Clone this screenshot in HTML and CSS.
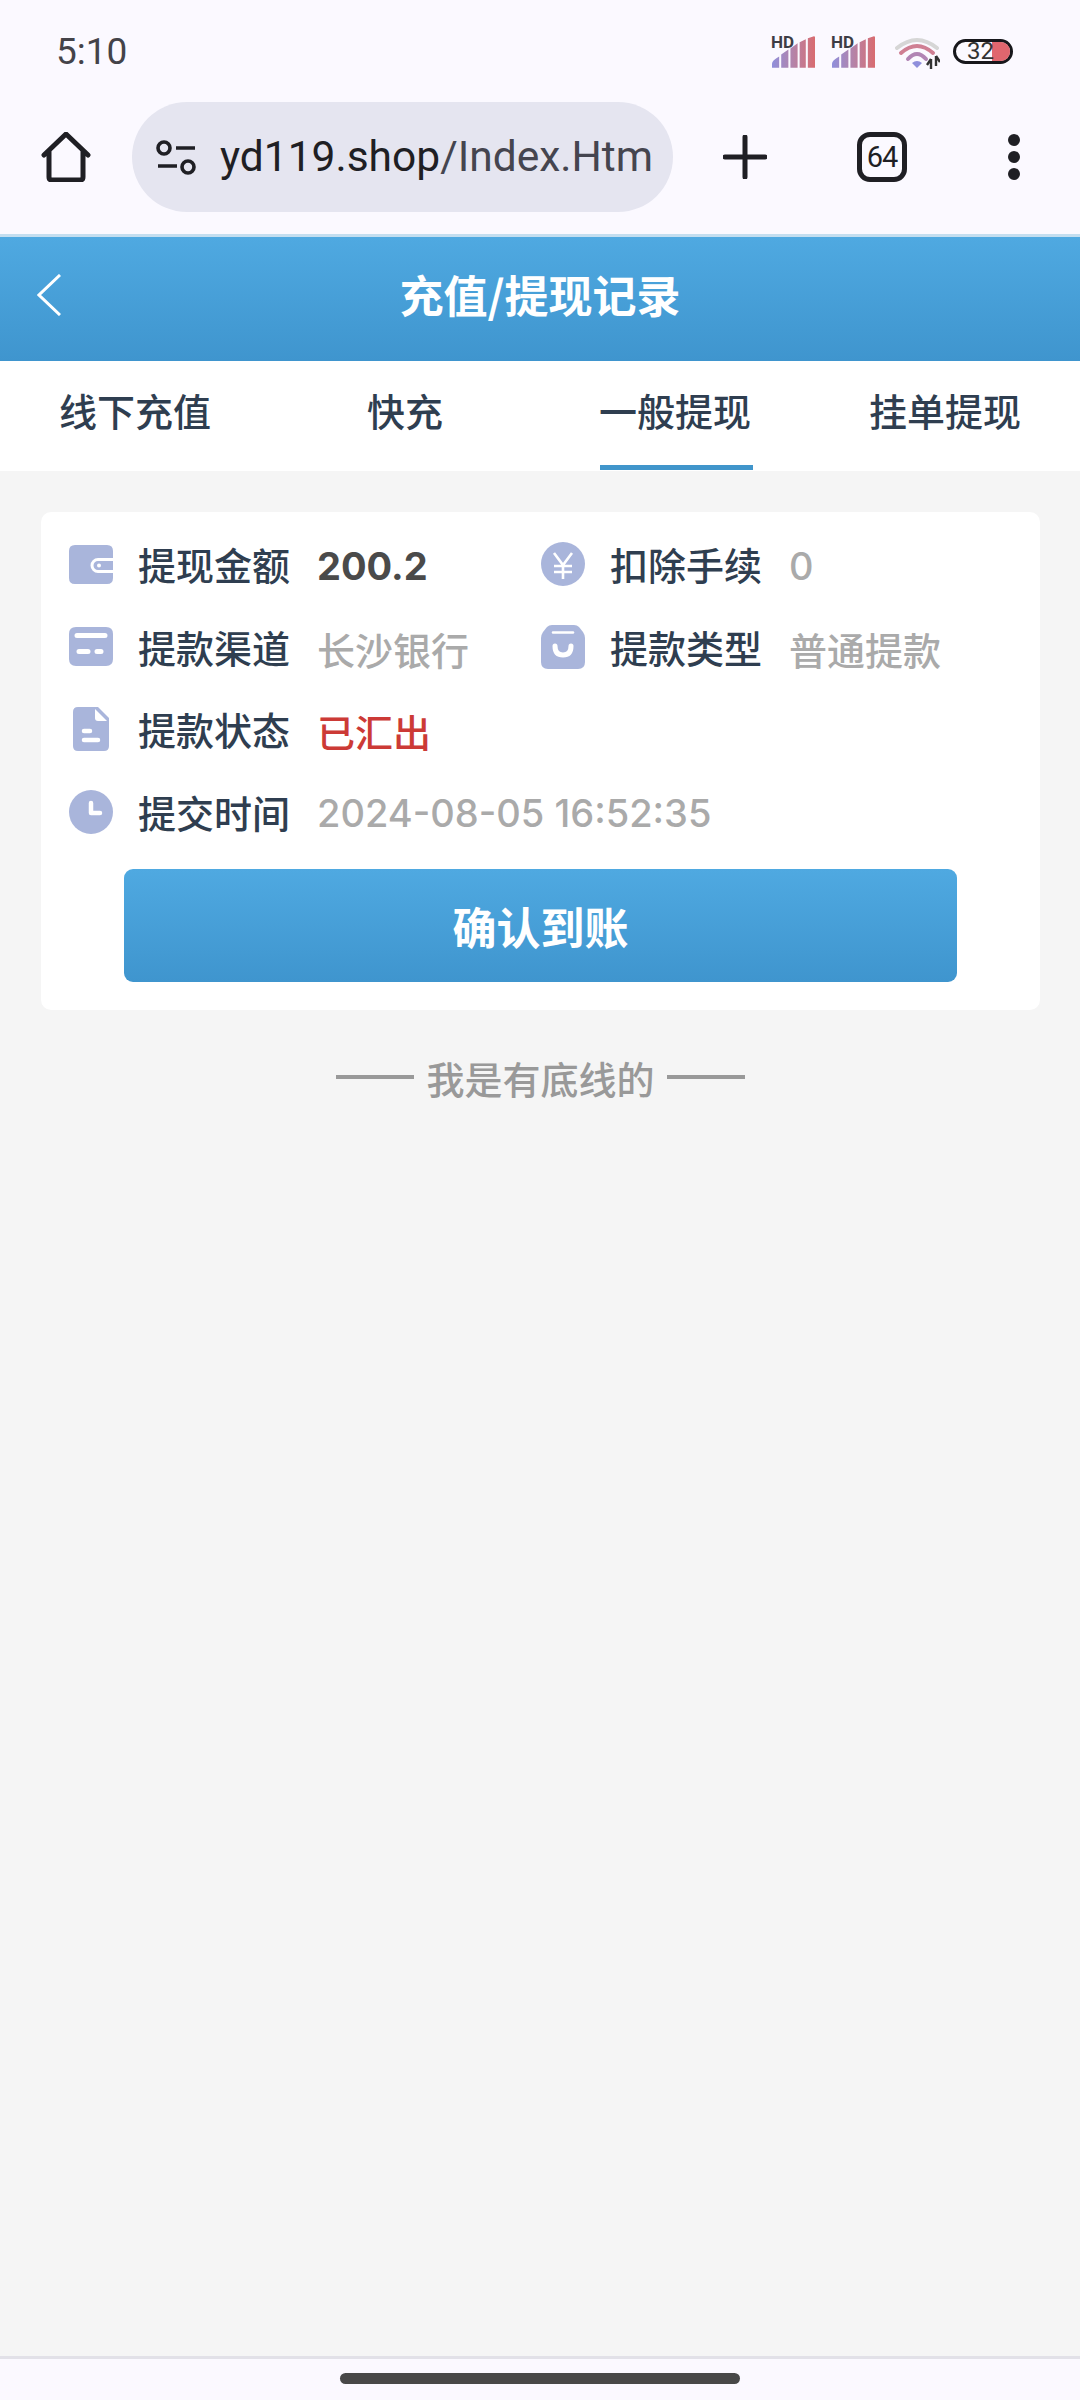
FILE: index.html
```html
<!DOCTYPE html>
<html lang="zh-CN">
<head>
<meta charset="utf-8">
<title>充值/提现记录</title>
<link rel="stylesheet" href="styles.css">
</head>
<body>
<div class="chrome">
  <div class="statusbar">
    <span class="clock">5:10</span>
    <div class="status-icons">
      <div class="signal"><span class="hd">HD</span>
        <svg width="43" height="32" viewBox="0 0 42 31"><defs><linearGradient id="sg" x1="0" x2="1" y1="0" y2="0"><stop offset="0" stop-color="#8f8fdc"/><stop offset=".5" stop-color="#b583a8"/><stop offset="1" stop-color="#d96c70"/></linearGradient></defs><path fill="url(#sg)" d="M0 31v-4q0-3 7-7v11zM9 31V18l7-5v18zM18 31V12l7-5v24zM27 31V6l6-3v28zM35 31V2l6-2q1 0 1 1v30z"/></svg>
      </div>
      <div class="signal"><span class="hd">HD</span>
        <svg width="43" height="32" viewBox="0 0 42 31"><path fill="url(#sg)" d="M0 31v-4q0-3 7-7v11zM9 31V18l7-5v18zM18 31V12l7-5v24zM27 31V6l6-3v28zM35 31V2l6-2q1 0 1 1v30z"/></svg>
      </div>
      <svg class="wifi" width="45" height="34" viewBox="0 0 45 34" fill="none"><path d="M2 12Q22-4 42 12" stroke="#d6d6d6" stroke-width="4" stroke-linecap="round"/><path d="M6 17Q22 3 38 17" stroke="#cf7f93" stroke-width="4" stroke-linecap="round"/><path d="M13 23Q22 13 31 23" stroke="#b184b4" stroke-width="4" stroke-linecap="round"/><path d="M17 27q5-4 10 0l-5 5z" fill="#8f8fdc"/><path d="M36 23v10M32 29l4-6M41 20v10M41 20l4 6" stroke="#333" stroke-width="2.4"/></svg>
      <div class="battery"><span class="battery-fill"></span><span class="battery-num">32</span></div>
    </div>
  </div>
  <div class="toolbar">
    <svg class="tb-home" width="50" height="50" viewBox="0 0 50 50" fill="none"><path d="M3 23 25 2l22 21M8 19v26q0 3 3 3h28q3 0 3-3V19" stroke="#1f1f24" stroke-width="5" stroke-linecap="round" stroke-linejoin="round"/></svg>
    <div class="pill">
      <svg class="tune" width="40" height="36" viewBox="0 0 40 36" fill="none" stroke="#1f1f24" stroke-width="3.6"><circle cx="8" cy="8" r="6"/><path d="M20 8h19M2 26h19"/><circle cx="32" cy="27" r="6"/></svg>
      <span class="url">yd119.shop<span class="url-path">/Index.Htm</span></span>
    </div>
    <svg class="tb-plus" width="44" height="44" viewBox="0 0 44 44" fill="none"><path d="M22 2v40M2 22h40" stroke="#1f1f24" stroke-width="5" stroke-linecap="round"/></svg>
    <div class="tabcount">64</div>
    <div class="dots"><i></i><i></i><i></i></div>
  </div>
</div>
<header class="head">
  <svg class="back" width="24" height="42" viewBox="0 0 24 42" fill="none"><path d="M23 1 2 21l21 20" stroke="#fff" stroke-width="3"/></svg>
  <h1 class="title">充值/提现记录</h1>
</header>
<nav class="tabs">
  <a class="tab">线下充值</a>
  <a class="tab">快充</a>
  <a class="tab active">一般提现</a>
  <a class="tab">挂单提现</a>
</nav>
<main class="main">
  <section class="card">
    <div class="grid">
      <div class="item">
        <span class="ico"><svg width="44" height="39" viewBox="0 0 44 39"><path fill="#a9b5db" d="M6 0h32q6 0 6 6v7H29a7.500 7.500 0 0 0 0 15h15v5q0 6-6 6H6q-6 0-6-6V6q0-6 6-6z"/><path fill="#a9b5db" d="M29 16h15v9H29a4.500 4.500 0 0 1 0-9z"/><circle cx="30" cy="20.500" r="2" fill="#fff"/></svg></span>
        <span class="label">提现金额</span><span class="val strong">200.2</span>
      </div>
      <div class="item right">
        <span class="ico"><svg width="44" height="44" viewBox="0 0 44 44"><circle cx="22" cy="22" r="22" fill="#a9b5db"/><path d="M13 11l9 12 9-12M13 24h18M13 30h18M22 23v14" fill="none" stroke="#fff" stroke-width="2.600"/></svg></span>
        <span class="label">扣除手续</span><span class="val">0</span>
      </div>
      <div class="item">
        <span class="ico"><svg width="44" height="39" viewBox="0 0 44 39"><path fill="#a9b5db" d="M7 0h30q7 0 7 7v25q0 7-7 7H7q-7 0-7-7V7q0-7 7-7z"/><path d="M8 8.500h28M10 24.500h9M28 24.500h4" stroke="#fff" stroke-width="5" stroke-linecap="round"/></svg></span>
        <span class="label">提款渠道</span><span class="val">长沙银行</span>
      </div>
      <div class="item right">
        <span class="ico"><svg width="44" height="44" viewBox="0 0 44 44"><path fill="#a9b5db" d="M11 0h22q3 0 5 2l4 5q2 3 2 6v24q0 7-7 7H7q-7 0-7-7V13q0-3 2-6l4-5q2-2 5-2z"/><path d="M12 7.500h20" stroke="#fff" stroke-width="2.500" stroke-linecap="round"/><path d="M14 21q0 9 8 9t8-9" fill="none" stroke="#fff" stroke-width="5" stroke-linecap="round"/></svg></span>
        <span class="label">提款类型</span><span class="val">普通提款</span>
      </div>
      <div class="item wide">
        <span class="ico"><svg width="36" height="44" viewBox="0 0 36 44"><path fill="#a9b5db" d="M5 0h20l11 11v28q0 5-5 5H5q-5 0-5-5V5q0-5 5-5z"/><path fill="#fff" d="M22 2l12 12h-9q-3 0-3-3z"/><path d="M11 24h6M11 33h14" stroke="#fff" stroke-width="4.500" stroke-linecap="round"/></svg></span>
        <span class="label">提款状态</span><span class="val red">已汇出</span>
      </div>
      <div class="item wide">
        <span class="ico"><svg width="44" height="44" viewBox="0 0 44 44"><circle cx="22" cy="22" r="22" fill="#a9b5db"/><path d="M22 13v10h9" fill="none" stroke="#fff" stroke-width="4.500" stroke-linecap="round" stroke-linejoin="round"/></svg></span>
        <span class="label">提交时间</span><span class="val">2024-08-05 16:52:35</span>
      </div>
    </div>
    <button class="confirm">确认到账</button>
  </section>
  <p class="end"><span class="dash"></span>我是有底线的<span class="dash"></span></p>
</main>
<footer class="nav"><span class="handle"></span></footer>
</body>
</html>
```

FILE: styles.css
```css
* { box-sizing: border-box; }
html, body { margin: 0; height: 100%; }
body {
  width: 1080px;
  height: 2400px;
  display: flex;
  flex-direction: column;
  background: #f5f5f5;
  font-family: "Noto Sans CJK SC", "Noto Sans", sans-serif;
  overflow: hidden;
}
.chrome { height: 234px; background: #fbf9ff; flex: none; }
.statusbar {
  height: 102px;
  display: flex;
  justify-content: space-between;
  align-items: flex-start;
  padding: 31px 67px 0 56px;
}
.clock { font: 400 37px/42px Roboto, sans-serif; color: #444349; }
.status-icons { display: flex; align-items: flex-start; padding-top: 5px; }
.signal { position: relative; width: 43px; height: 32px; margin-right: 17px; }
.signal svg { display: block; }
.hd {
  position: absolute; left: -1px; top: -1px;
  font: 700 17px/15px Roboto, sans-serif; color: #3d3d45;
}
.wifi { display: block; margin: 0 13px 0 3px; }
.battery {
  position: relative; width: 60px; height: 25px; margin-top: 3px;
  border: 3.500px solid #17171b; border-radius: 13px;
  background: #fbf9ff;
}
.battery-fill { position: absolute; right: 0; top: 0; bottom: 0; width: 18px; background: #e0666e; border-radius: 0 9px 9px 0; }
.battery-num {
  position: absolute; left: 11px; top: -2px;
  font: 400 24px/22px Roboto, sans-serif; color: #333;
}
.toolbar { display: flex; align-items: center; height: 110px; padding-left: 41px; }
.tb-home { flex: none; }
.pill {
  flex: none; width: 541px; height: 110px; margin-left: 41px;
  padding: 0 17px 0 24px; display: flex; align-items: center;
  background: #e5e5f0; border-radius: 55px;
}
.tune { flex: none; margin-top: 2px; margin-right: 24px; }
.url {
  font: 400 42.5px/60px Roboto, sans-serif; color: #1f1f24; white-space: nowrap;
}
.url-path { color: #45454f; }
.tb-plus { flex: none; margin-left: 50px; }
.tabcount {
  flex: none; width: 50px; height: 50px; margin-left: 90px;
  display: flex; align-items: center; justify-content: center;
  border: 5px solid #1f1f24; border-radius: 13px;
  font: 400 29px/1 Roboto, sans-serif; color: #1f1f24; letter-spacing: -1px;
}
.dots { flex: none; margin-left: 101px; display: flex; flex-direction: column; gap: 5px; }
.dots i { width: 12px; height: 12px; border-radius: 50%; background: #1f1f24; display: block; }

.head {
  flex: none; height: 127px; position: relative;
  display: flex; align-items: center; justify-content: center;
  padding-bottom: 10px;
  background: linear-gradient(#4fa9e1, #3f95ce);
  border-top: 3px solid #c3def0;
}
.back { position: absolute; left: 37px; top: 37px; }
.title { margin: 0; font-size: 44px; font-weight: 700; color: #fff; line-height: 60px; }
.tabs { flex: none; display: grid; grid-template-columns: repeat(4, 1fr); height: 110px; background: #fff; }
.tab {
  position: relative; display: flex; align-items: center; justify-content: center;
  padding-bottom: 14px;
  font-size: 38px; font-weight: 500; color: #2f3e50;
}
.tab.active::after {
  content: ""; position: absolute; left: 60px; right: 57px; bottom: 1px; height: 5px;
  background: #4095cb;
}
.main { flex: 1; padding: 41px 40px 0 41px; }
.card { background: #fff; border-radius: 10px; padding-top: 11px; height: 498px; }
.grid { display: grid; grid-template-columns: 500px 1fr; grid-auto-rows: 82.5px; }
.item { display: flex; align-items: center; padding-left: 28px; }
.item.right { padding-left: 0; }
.item.wide { grid-column: 1 / -1; }
.ico { flex: none; width: 44px; margin-right: 25px; display: flex; justify-content: center; }
.label { width: 152px; padding-bottom: 1px; font-size: 38px; font-weight: 500; color: #2f3e50; white-space: nowrap; }
.val {
  margin-left: 27px; padding-top: 3px; font-family: Inter, "Noto Sans CJK SC", sans-serif;
  font-size: 38px; font-weight: 500; color: #aaaaaa; white-space: nowrap;
}
.strong { font-weight: 700; color: #4a4a4a; }
.red { color: #cc3a36; }
.confirm {
  display: block; width: 833px; height: 113px; margin: 16px auto 0; padding: 0;
  border: 0; border-radius: 9px;
  background: linear-gradient(#4fa9e1, #3f95ce);
  font: 700 44px/1 "Noto Sans CJK SC", sans-serif; color: #fff;
}
.end {
  margin: 43px 0 0; display: flex; justify-content: center; align-items: center; gap: 12px;
  height: 48px; font-size: 38px; font-weight: 500; color: #999;
}
.dash { width: 78px; height: 4px; background: #999; }
.nav {
  flex: none; height: 44px; background: #fbf9ff; border-top: 3px solid #e2e1e8;
  display: flex; justify-content: center; padding-top: 14px;
}
.handle { width: 400px; height: 11px; border-radius: 6px; background: #484848; }
```
